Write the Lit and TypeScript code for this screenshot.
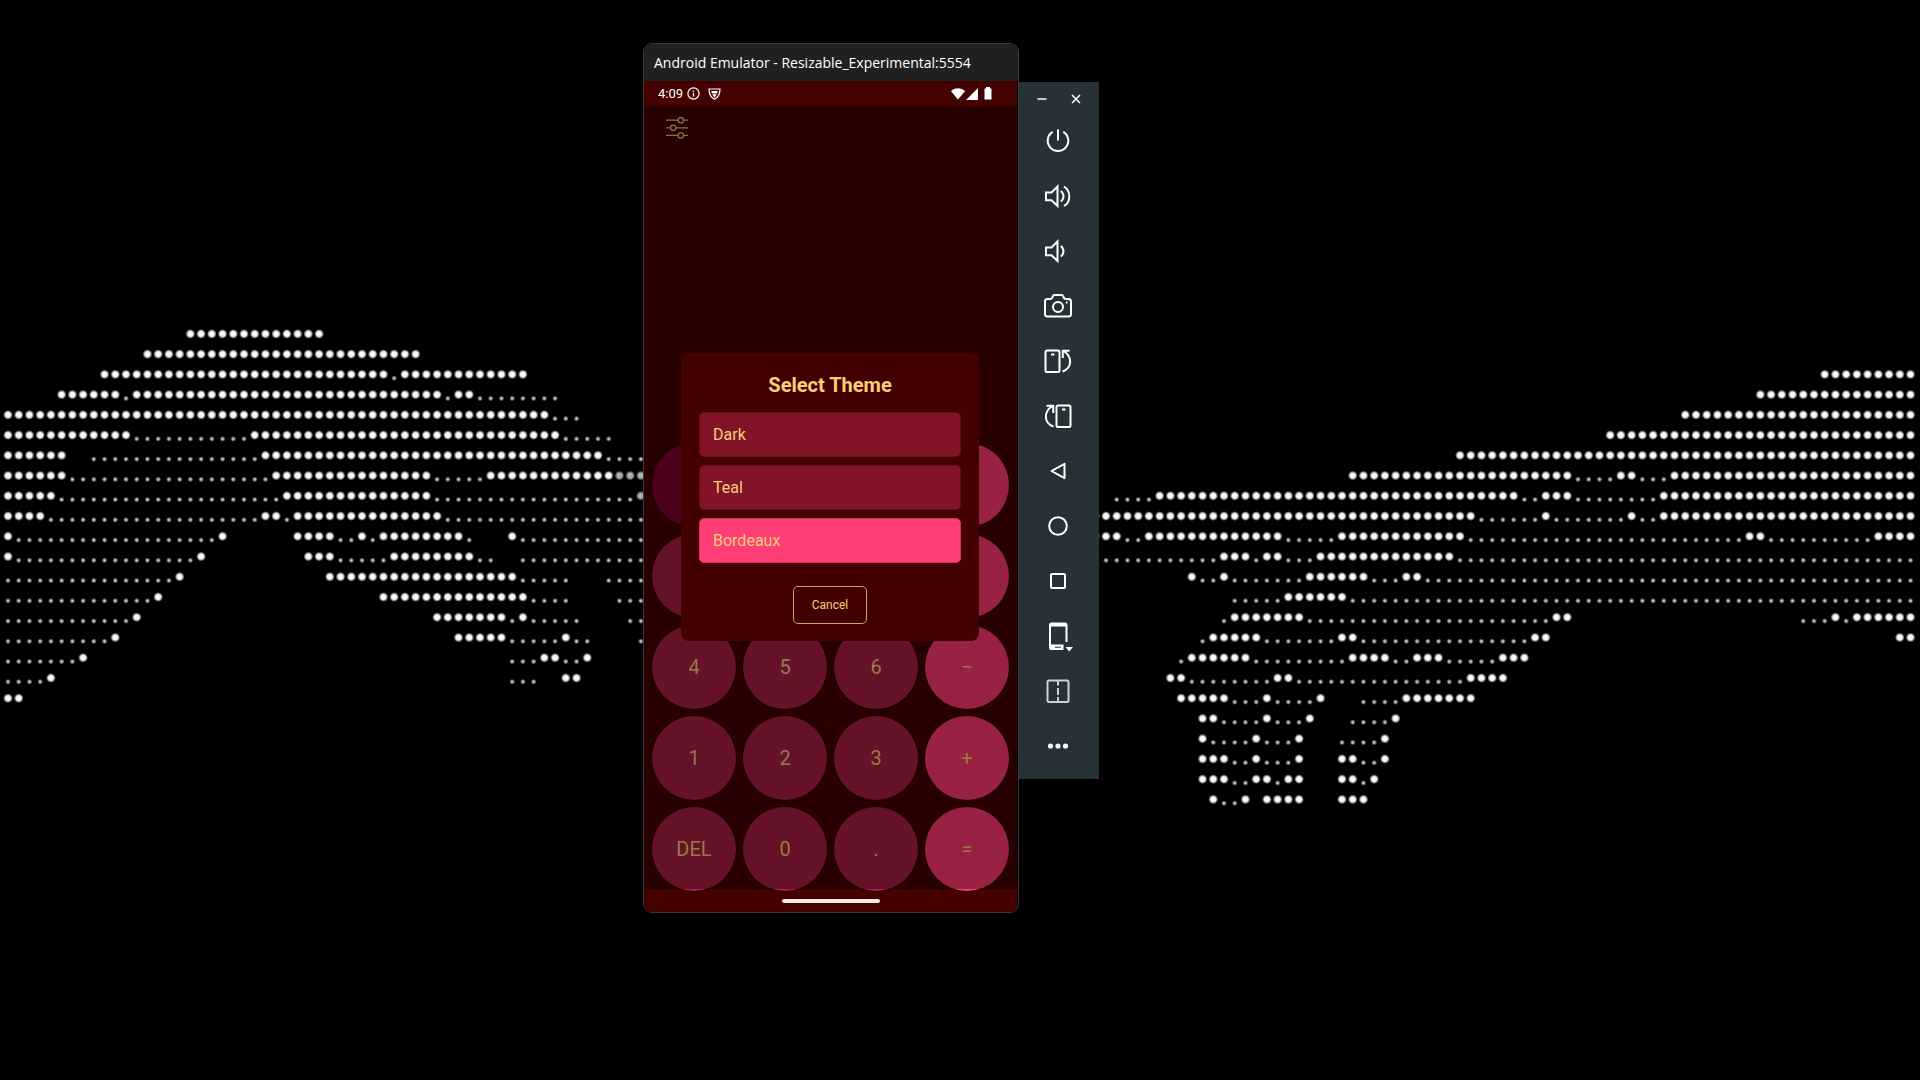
import { LitElement, html, svg, css } from "lit";
import { customElement, state } from "lit/decorators.js";

/* Halftone wallpaper. Each entry is one grid row: "B" runs are bright dots,
   "d" runs are dimmed ones and "s" runs are faint dots, each with the first
   and last column of the run. */
const LEFT_HAND: Record<number, string> = {
  0: "B17-29",
  1: "B13-38",
  2: "B9-35 s36 B37-48",
  3: "B5-10 s11 B12-40 s41 B42-43 s44-51",
  4: "B0-50 s51-53",
  5: "B0-11 s12-22 B23-51 s52-56",
  6: "B0-5 s8-23 B24-55 s56-59",
  7: "B0-5 s6-24 B25-39 s40-44 B45-56 d57-59",
  8: "B0-4 s5-25 B26-39 s40-58 d59",
  9: "B0-3 s4-23 B24-25 s26 B27-40 s41-59",
  10: "B0 s1-19 B20 B27-30 s31-32 B33 s34 B35-42 s43 B47 s48-59",
  11: "B0 s1-17 B18 B28-30 s31-35 B36-43 s44-45 s48-59",
  12: "s0-15 B16 B30-47 s48-52 s56-59",
  13: "s0-13 B14 B35-48 s49-52 s57-59",
  14: "s0-11 B12 B40-46 s47 B48 s49-53 s58-59",
  15: "s0-9 B10 B42-46 s47-51 B52 s53-54 s59",
  16: "s0-6 B7 s47-49 B50-51 s52-53 B54",
  17: "s0-3 B4 s47-49 B52-53",
  18: "B0-1",
};

const RIGHT_HAND: Record<number, string> = {
  2: "B67-75",
  3: "B61-75",
  4: "B54-75",
  5: "B47-75",
  6: "B33-75",
  7: "B23-43 s44-47 B48-49 s50-52 B53-75",
  8: "s1-4 B5-38 s39-40 B41-43 s44-51 B52-75",
  9: "B-1-34 s35-40 B41 s42-48 B49 s50-51 B52-75",
  10: "B-1-1 s2-3 B4-16 s17-21 B22-33 s34-59 B60-61 s62-71 B72-75",
  11: "s0-10 B11-13 s14 B15-16 s17-19 B20-32 s33-75",
  12: "B8 s9-10 B11 s12-18 B19-24 s25-27 B28-29 s30-75",
  13: "s12-16 B17-22 s23-75",
  14: "s11 B12-18 s19-41 B42-43 s65-67 B68 s69 B70-75",
  15: "s9 B10-14 s15-21 B22-23 s24-39 B40-41 B74-75",
  16: "s7 B8-13 s14-22 B23-26 s27-28 B29-31 s32-36 B37-39",
  17: "B6-7 s8-15 B16-17 s18-33 B34-37",
  18: "B7-11 s12-14 B15 s16-19 B20 s24-27 B28-34",
  19: "B9-10 s11-14 B15 s16-18 B19 s23-26 B27",
  20: "B9 s10-13 B14 s15-17 B18 s22-25 B26",
  21: "B9-11 s12-13 B14 s15-17 B18 B22-23 s24-25 B26",
  22: "B9-11 s12-13 B14-15 s16 B17-18 B22-23 s24 B25",
  23: "B10 s11-12 B13 B15-18 B22-24",
};

const PITCH_X = 10.727;
const PITCH_Y = 20.24;
const FIRST_ROW_Y = 333.9;

function dots(rows: Record<number, string>, originX: number) {
  const out: unknown[] = [];
  for (const [row, runs] of Object.entries(rows)) {
    const y = FIRST_ROW_Y + Number(row) * PITCH_Y;
    for (const run of runs.split(" ")) {
      const m = /^([Bsd])(-?\d+)(?:-(\d+))?$/.exec(run)!;
      const from = Number(m[2]);
      const to = m[3] === undefined ? from : Number(m[3]);
      for (let c = from; c <= to; c++) {
        const x = originX + c * PITCH_X;
        out.push(
          m[1] === "s"
            ? svg`<circle cx=${x} cy=${y + 3.8} r="3" fill="url(#faint)"></circle>`
            : svg`<circle cx=${x} cy=${y} r="5" fill="url(#bright)" opacity=${m[1] === "d" ? 0.7 : 1}></circle>`
        );
      }
    }
  }
  return out;
}

@customElement("halftone-wallpaper")
export class HalftoneWallpaper extends LitElement {
  static styles = css`
    :host { display: block; }
    .art { display: block; width: 100%; height: 100%; }
  `;

  render() {
    return html`
      <svg class="art" viewBox="0 0 1920 1080" preserveAspectRatio="xMidYMid slice" aria-hidden="true">
        <defs>
          <radialGradient id="bright">
            <stop offset="0" stop-color="#fff"></stop>
            <stop offset="0.5" stop-color="#f4f4f4"></stop>
            <stop offset="0.75" stop-color="#bbb" stop-opacity="0.65"></stop>
            <stop offset="1" stop-color="#888" stop-opacity="0"></stop>
          </radialGradient>
          <radialGradient id="faint">
            <stop offset="0" stop-color="#dcdcdc"></stop>
            <stop offset="0.4" stop-color="#b0b0b0" stop-opacity="0.9"></stop>
            <stop offset="1" stop-color="#888" stop-opacity="0"></stop>
          </radialGradient>
        </defs>
        ${dots(LEFT_HAND, 8)} ${dots(RIGHT_HAND, 1106)}
      </svg>
    `;
  }
}

const KEYS: { label: string; kind: string }[] = [
  { label: "C", kind: "clear" },
  { label: "( )", kind: "digit" },
  { label: "%", kind: "digit" },
  { label: "÷", kind: "operator" },
  { label: "7", kind: "digit" },
  { label: "8", kind: "digit" },
  { label: "9", kind: "digit" },
  { label: "×", kind: "operator" },
  { label: "4", kind: "digit" },
  { label: "5", kind: "digit" },
  { label: "6", kind: "digit" },
  { label: "−", kind: "operator" },
  { label: "1", kind: "digit" },
  { label: "2", kind: "digit" },
  { label: "3", kind: "digit" },
  { label: "+", kind: "operator" },
  { label: "DEL", kind: "digit last" },
  { label: "0", kind: "digit last" },
  { label: ".", kind: "digit last" },
  { label: "=", kind: "operator last" },
];

@customElement("calculator-screen")
export class CalculatorScreen extends LitElement {
  @state() private theme = "Bordeaux";

  static styles = css`
    :host {
      position: relative;
      display: flex;
      flex-direction: column;
      color: #987a46;
      background: #290000;
      font-family: Roboto, "Liberation Sans", sans-serif;
    }
    button { font: inherit; color: inherit; border: 0; padding: 0; cursor: pointer; }
    .status {
      display: flex;
      align-items: center;
      gap: 4px;
      height: 25px;
      padding: 0 25px 0 14px;
      background: #450000;
      color: #fff;
      font-size: 13px;
    }
    .status svg { display: block; }
    .shield { margin-left: 4px; }
    .signals { display: flex; align-items: center; gap: 1px; margin-left: auto; }
    .battery { margin-left: 5px; }
    .toolbar { display: flex; padding: 10px 21px; }
    .settings { display: block; background: none; }
    .settings svg { display: block; }
    .keys {
      display: grid;
      grid-template-columns: repeat(4, 1fr);
      gap: 7px;
      margin-top: auto;
      padding: 0 8px;
      z-index: 1;
      isolation: isolate;
      position: relative;
    }
    .key {
      aspect-ratio: 1;
      border-radius: 50%;
      background: #661228;
      font-size: 20px;
      box-shadow: 0 0 0 1px #1e0004;
    }
    .clear { background: #4d001b; }
    .operator { background: #992244; }
    .digit.last { background: linear-gradient(#661228 82px, #b01c48 82px); }
    .operator.last { background: linear-gradient(#992244 82px, #ff3e76 82px); }
    .gesture {
      display: flex;
      align-items: center;
      justify-content: center;
      height: 23px;
      margin-top: -2px;
      background: #450000;
    }
    .pill { width: 98px; height: 4px; border-radius: 2px; background: #f2e8e8; }
    .dialog {
      position: absolute;
      z-index: 2;
      top: 272px;
      left: 37px;
      right: 38px;
      display: flex;
      flex-direction: column;
      box-sizing: border-box;
      padding: 18px 18px 17px;
      border-radius: 8px;
      background: #430000;
      color: #f8cf79;
    }
    .heading {
      margin: 0 0 12px;
      font-size: 20px;
      line-height: 29px;
      font-weight: 700;
      text-align: center;
    }
    .options { display: flex; flex-direction: column; gap: 8px; }
    .option {
      height: 45px;
      padding: 0 13px;
      border: 1px solid #6a0b1f;
      border-radius: 5px;
      background: #821329;
      font-size: 16px;
      text-align: left;
    }
    .option.selected { border-color: #d92f62; background: #ff3e76; }
    .cancel {
      align-self: center;
      margin-top: 23px;
      height: 38px;
      padding: 0 18px;
      border: 1px solid #d0a55c;
      border-radius: 5px;
      background: none;
      font-size: 12px;
    }
  `;

  render() {
    return html`
      <div class="status">
        <span>4:09</span>
        <svg width="13" height="13" viewBox="0 0 13 13" fill="none" stroke="#fff">
          <circle cx="6.5" cy="6.5" r="5.6" stroke-width="1.2"></circle>
          <path d="M6.5 5.8V9.5M6.5 3.4V4.8" stroke-width="1.4"></path>
        </svg>
        <svg class="shield" width="13" height="12" viewBox="0 0 13 12" fill="none" stroke="#fff">
          <path d="M1 1H12C12 6 10 9.5 6.5 11.2C3 9.5 1 6 1 1Z" stroke-width="1.2"></path>
          <path d="M3.200 3H9.800L9 5.500H4ZM4.300 6.200H8.700L6.500 9.700Z" fill="#fff" stroke="none"></path>
        </svg>
        <span class="signals">
          <svg width="14" height="12" viewBox="0 0 14 12" fill="#fff">
            <path d="M0 3.2C4-.6 10-.6 14 3.2L7 11.5Z"></path>
          </svg>
          <svg width="12" height="12" viewBox="0 0 12 12" fill="#fff"><path d="M12 0V12H0Z"></path></svg>
          <svg class="battery" width="8" height="13" viewBox="0 0 8 13" fill="#fff">
            <path d="M2 0H6V1.5H7.5V12.5H.5V1.5H2Z"></path>
          </svg>
        </span>
      </div>
      <div class="toolbar">
        <button class="settings" aria-label="Settings">
          <svg width="24" height="24" viewBox="0 0 24 24" fill="none" stroke="#8d7040" stroke-width="1.3">
            <path d="M1 4.2H13M18.500 4.2H23M1 11.8H5.5M11 11.8H23M1 19.4H13M18.500 19.4H23"></path>
            <circle cx="15.8" cy="4.2" r="2.7"></circle>
            <circle cx="8.2" cy="11.8" r="2.7"></circle>
            <circle cx="15.8" cy="19.4" r="2.7"></circle>
          </svg>
        </button>
      </div>
      <div class="keys">
        ${KEYS.map((k) => html`<button class="key ${k.kind}">${k.label}</button>`)}
      </div>
      <div class="gesture"><span class="pill"></span></div>
      <section class="dialog" role="dialog" aria-labelledby="theme-heading">
        <h1 class="heading" id="theme-heading">Select Theme</h1>
        <div class="options">
          ${["Dark", "Teal", "Bordeaux"].map(
            (name) => html`<button
              class="option ${name === this.theme ? "selected" : ""}"
              aria-pressed=${name === this.theme}
              @click=${() => (this.theme = name)}
            >${name}</button>`
          )}
        </div>
        <button class="cancel">Cancel</button>
      </section>
    `;
  }
}

const TOOLS: { label: string; art: unknown }[] = [
  { label: "Power", art: svg`<path d="M14 2.5V13.5M8.7 4.8A10.3 10.3 0 1 0 19.3 4.8"></path>` },
  {
    label: "Volume up",
    art: svg`<path d="M2 10.5V18.2H7.5L13.5 24V4.5L7.5 10.5ZM16.8 9A6.5 6.5 0 0 1 16.8 19.5M20 4.5C27 9 27 20 20 24"></path>`,
  },
  { label: "Volume down", art: svg`<path d="M2 10.5V18.2H7.5L13.5 24V4.5L7.5 10.5ZM16.8 9A6.5 6.5 0 0 1 16.8 19.5"></path>` },
  {
    label: "Take screenshot",
    art: svg`<path d="M3.5 7H6Q8 7 8.5 5L9 3.8Q9.3 3 10.5 3H17.5Q18.7 3 19 3.8L19.5 5Q20 7 22 7H24.5Q27 7 27 9.5V22Q27 24.5 24.5 24.5H3.5Q1 24.5 1 22V9.5Q1 7 3.5 7Z"></path><circle cx="14" cy="15" r="5"></circle><path d="M22 10.6H23.5"></path>`,
  },
  {
    label: "Rotate left",
    art: svg`<rect x="1.500" y="3.500" width="14" height="21.500" rx="1.500"></rect><path d="M7 7.500H10.500M18.500 24.500C28.500 21 28.500 9.500 19.500 4M18.800 11V3.700H25.500"></path>`,
  },
  {
    label: "Rotate right",
    art: svg`<rect x="12.500" y="3.500" width="14" height="21.500" rx="1.500"></rect><path d="M18 7.500H21.500M9.500 24.500C-.5 21-.5 9.500 8.500 4M9.200 11V3.700H2.500"></path>`,
  },
  { label: "Back", art: svg`<path d="M20.5 6.8V21.2L7.5 14Z" stroke-linejoin="round"></path>` },
  { label: "Home", art: svg`<circle cx="14" cy="14" r="8.8"></circle>` },
  { label: "Overview", art: svg`<rect x="7" y="7" width="14" height="14" rx="1"></rect>` },
  {
    label: "Display mode",
    art: svg`<path d="M22.5 20V3Q22.5 1.5 21 1.5H7.5Q6 1.5 6 3V25.5Q6 27 7.5 27H19"></path><path d="M6 1.5H22.5V4.500H6ZM6 22.500H19.500V28H8Q6 28 6 26Z" fill="#fff" stroke="none"></path><path d="M11 25.200H17" stroke="#263238" stroke-width="1"></path><path d="M21.500 25H29L25.200 29.500Z" fill="#fff" stroke="none"></path>`,
  },
  {
    label: "Fold",
    art: svg`<g stroke="#cfd0cf"><rect x="3.500" y="3.500" width="21" height="21.500" rx="1.500"></rect><path d="M14 3.500V8.500M14 11V18M14 20V25"></path></g>`,
  },
  {
    label: "More",
    art: svg`<g fill="#fff" stroke="none"><circle cx="6.500" cy="14" r="2.600"></circle><circle cx="14" cy="14" r="2.600"></circle><circle cx="21.500" cy="14" r="2.600"></circle></g>`,
  },
];

@customElement("emulator-toolbar")
export class EmulatorToolbar extends LitElement {
  static styles = css`
    :host { display: flex; flex-direction: column; background: #263238; }
    button {
      display: flex;
      align-items: center;
      justify-content: center;
      padding: 0;
      border: 0;
      background: none;
      cursor: pointer;
    }
    svg { display: block; overflow: visible; fill: none; stroke: #fff; }
    .controls { display: flex; justify-content: center; gap: 14px; padding-top: 7px; height: 24px; }
    .control { width: 20px; height: 20px; }
    .tools { display: flex; flex-direction: column; padding: 0 2px 6px 0; }
    .tool { height: 55px; stroke-width: 2px; }
  `;

  render() {
    return html`
      <div class="controls">
        <button class="control" aria-label="Minimize">
          <svg width="10" height="10" viewBox="0 0 10 10" stroke-width="1.5"><path d="M.5 5H9.5"></path></svg>
        </button>
        <button class="control" aria-label="Close">
          <svg width="10" height="10" viewBox="0 0 10 10" stroke-width="1.5"><path d="M1 1L9 9M9 1L1 9"></path></svg>
        </button>
      </div>
      <div class="tools">
        ${TOOLS.map(
          (t) => html`<button class="tool" aria-label=${t.label}>
            <svg width="28" height="28" viewBox="0 0 28 28">${t.art}</svg>
          </button>`
        )}
      </div>
    `;
  }
}

@customElement("app-root")
export class AppRoot extends LitElement {
  static styles = css`
    :host { display: block; position: relative; min-height: 100vh; overflow: hidden; background: #000; }
    .wallpaper { position: absolute; inset: 0; }
    .emulator { position: absolute; top: 43px; left: 643px; display: flex; align-items: flex-start; }
    .window {
      display: flex;
      flex-direction: column;
      box-sizing: border-box;
      width: 376px;
      border: 1px solid #3a3a3a;
      border-radius: 9px;
      overflow: hidden;
      background: #000;
    }
    .title {
      display: flex;
      align-items: center;
      height: 37px;
      padding: 0 10px;
      background: #202020;
      color: #fff;
      font: 400 14px "Open Sans", "Noto Sans", sans-serif;
      white-space: nowrap;
    }
    .screen { height: 831px; margin-right: 1px; }
    .side { width: 80px; margin-top: 39px; }
  `;

  render() {
    return html`
      <halftone-wallpaper class="wallpaper"></halftone-wallpaper>
      <div class="emulator">
        <div class="window">
          <div class="title">Android Emulator - Resizable_Experimental:5554</div>
          <calculator-screen class="screen"></calculator-screen>
        </div>
        <emulator-toolbar class="side"></emulator-toolbar>
      </div>
    `;
  }
}
